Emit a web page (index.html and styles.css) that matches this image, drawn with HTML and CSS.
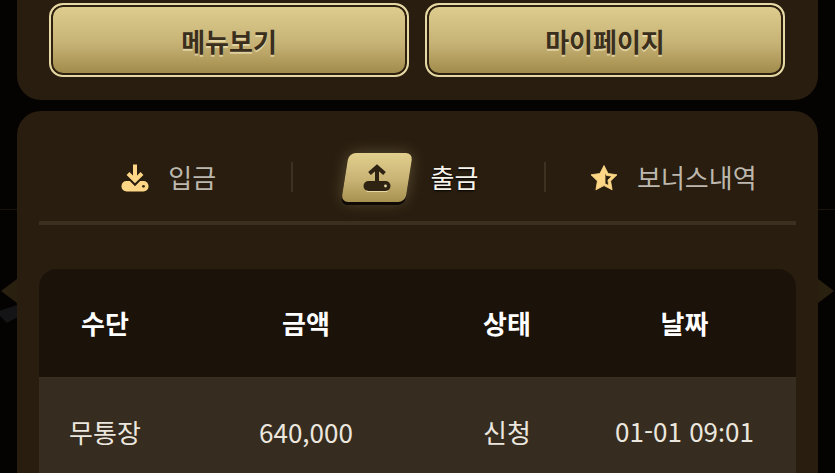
FILE: index.html
```html
<!DOCTYPE html>
<html lang="ko">
<head>
<meta charset="utf-8">
<title>출금</title>
<link rel="stylesheet" href="styles.css">
</head>
<body>
<div class="backdrop" aria-hidden="true">
  <span class="rule"></span>
  <span class="arrow arrow-left"></span>
  <span class="arrow arrow-right"></span>
  <span class="smudge"></span>
</div>
<main class="page">
  <section class="panel panel-top">
    <a class="gold-btn">메뉴보기</a>
    <a class="gold-btn">마이페이지</a>
  </section>
  <section class="panel panel-main">
    <nav class="tabs">
      <a class="tab">
        <svg class="tab-icon" viewBox="0 0 28 28"><rect class="fill" x="0.500" y="17" width="27" height="10.500" rx="5"/><path class="cut" d="M8 12l6 6 6-6"/><path class="arrow-line gold-line" d="M14 0.500v15M7 9.500l7 7 7-7"/><circle class="hole" cx="22.500" cy="22.300" r="1.400"/></svg>
        <span class="tab-label">입금</span>
      </a>
      <a class="tab tab-active">
        <span class="tab-badge">
          <svg class="tab-icon" viewBox="0 0 28 28"><rect class="light" x="3" y="22" width="22" height="6.500" rx="3"/><rect class="dark" x="0.500" y="17" width="27" height="10" rx="5"/><path class="arrow-line dark-line" d="M14 19V3M6.500 9.500L14 3l7.500 6.500"/><circle class="light" cx="22.500" cy="22" r="1.400"/></svg>
        </span>
        <span class="tab-label">출금</span>
      </a>
      <a class="tab">
        <svg class="tab-icon" viewBox="0 0 28 28"><path class="fill star" fill-rule="evenodd" d="M14 1.500l4.100 8 8.900 1.300-6.400 6.200 1.500 8.800-8.100-4.200-8.100 4.200 1.500-8.800L1 10.800l8.900-1.300zM15 8.500v11.200l3.700 1.900-.8-5.500 4-3.900-5.400-.8z"/></svg>
        <span class="tab-label">보너스내역</span>
      </a>
    </nav>
    <hr class="divider">
    <table class="history">
      <colgroup>
        <col class="col-method"><col class="col-amount"><col class="col-status"><col class="col-date">
      </colgroup>
      <thead>
        <tr><th>수단</th><th>금액</th><th>상태</th><th>날짜</th></tr>
      </thead>
      <tbody>
        <tr><td>무통장</td><td>640,000</td><td>신청</td><td>01-01 09<span class="colon">:</span>01</td></tr>
      </tbody>
    </table>
  </section>
</main>
</body>
</html>
```
FILE: styles.css
```css
* { box-sizing: border-box; }
html, body { height: 100%; }
body {
  margin: 0;
  height: 473px;
  overflow: hidden;
  position: relative;
  background: #050302;
  color: #e8e4dc;
  font-family: "Noto Sans CJK KR", "Noto Sans", sans-serif;
  font-size: 26px;
}
.backdrop { position: absolute; inset: 0; }
.rule { position: absolute; left: 0; right: 0; top: 209px; height: 1px; background: #1a130a; }
.arrow { position: absolute; top: 279px; width: 0; height: 0; border-style: solid; border-color: transparent; border-width: 12px 0; }
.arrow-left { left: 1px; border-right: 16px solid #2a2010; }
.arrow-right { right: 1px; border-left: 16px solid #2a2010; }
.smudge { position: absolute; left: 0; top: 305px; width: 17px; height: 18px; background: #141316; clip-path: polygon(0 30%, 100% 0, 100% 70%, 40% 100%, 0 60%); }

.page { position: relative; display: flex; flex-direction: column; gap: 11px; height: 473px; padding: 0 17px; }
.panel { background: #281d0f; }
.panel-top {
  display: flex;
  flex: none;
  gap: 16px;
  height: 100px;
  padding: 3px 33px 0 32px;
  border-radius: 0 0 24px 24px;
}
.gold-btn {
  flex: 1;
  height: 74px;
  display: flex;
  align-items: center;
  justify-content: center;
  border: 2px solid #e6d8a4;
  border-radius: 14px;
  background: linear-gradient(180deg, #dfce90 0%, #c6b275 55%, #9f8949 100%);
  box-shadow: inset 0 0 0 2px #2e2110;
  color: #3a2e1d;
  font-weight: 700;
  text-shadow: 0 2px 0 rgba(255, 245, 205, .55);
}
.panel-main {
  flex: 1;
  overflow: hidden;
  padding: 42px 22px 0;
  border-radius: 24px 24px 0 0;
}
.tabs { display: grid; grid-template-columns: repeat(3, 1fr); height: 49px; }
.tab {
  position: relative;
  display: flex;
  align-items: center;
  justify-content: center;
  gap: 19px;
  padding-left: 7px;
  color: #bdb8ae;
}
.tab + .tab::before {
  content: "";
  position: absolute;
  left: 0;
  top: 9px;
  width: 2px;
  height: 30px;
  background: #3d3222;
}
.tab-label { margin-bottom: 2px; }
.tab-active { color: #f7f3ea; gap: 18px; padding: 0 16px 0 0; text-shadow: 0 1px 2px #000; }
.tab-icon { display: block; flex: none; width: 28px; height: 28px; }
.tab-badge {
  position: relative;
  width: 72px;
  height: 49px;
  display: flex;
  align-items: center;
  justify-content: center;
}
.tab-badge::before {
  content: "";
  position: absolute;
  inset: 0 4px;
  border-radius: 7px;
  transform: skewX(-9deg);
  background: linear-gradient(180deg, #e2d08e 0%, #c8b274 55%, #a89250 100%);
  box-shadow: 0 3px 0 #0e0905, 0 0 16px rgba(226, 208, 142, .28);
}
.tab-badge .tab-icon { position: relative; }
.fill { fill: #fdd785; }
.star { stroke: #fdd785; stroke-width: .8; stroke-linejoin: round; }
.hole { fill: #3a2a14; }
.dark { fill: #2e2312; }
.light { fill: #e6d9a6; }
.cut { fill: none; stroke: #281d0f; stroke-width: 6; }
.arrow-line { fill: none; stroke-width: 4; }
.gold-line { stroke: #fdd785; }
.dark-line { stroke: #2e2312; }
.divider {
  height: 4px;
  margin: 19px 0 44px;
  border: 0;
  background: #3b3020;
}
.history {
  width: 757px;
  table-layout: fixed;
  border-collapse: separate;
  border-spacing: 0;
  text-align: center;
}
.col-method, .col-status { width: 132px; }
.col-amount { width: 270px; }
.col-date { width: 223px; }
.history th {
  height: 109px;
  padding: 0 0 1px;
  background: #1b1209;
  color: #fff;
  font-weight: 700;
  border-bottom: 1px solid #3a2f20;
}
.history th:first-child { border-top-left-radius: 18px; }
.history th:last-child { border-top-right-radius: 18px; }
.history td {
  height: 106px;
  padding: 0;
  background: #372c20;
  color: #ebe7df;
  font-weight: 400;
}
.colon { font-family: "Noto Sans", sans-serif; }
```
